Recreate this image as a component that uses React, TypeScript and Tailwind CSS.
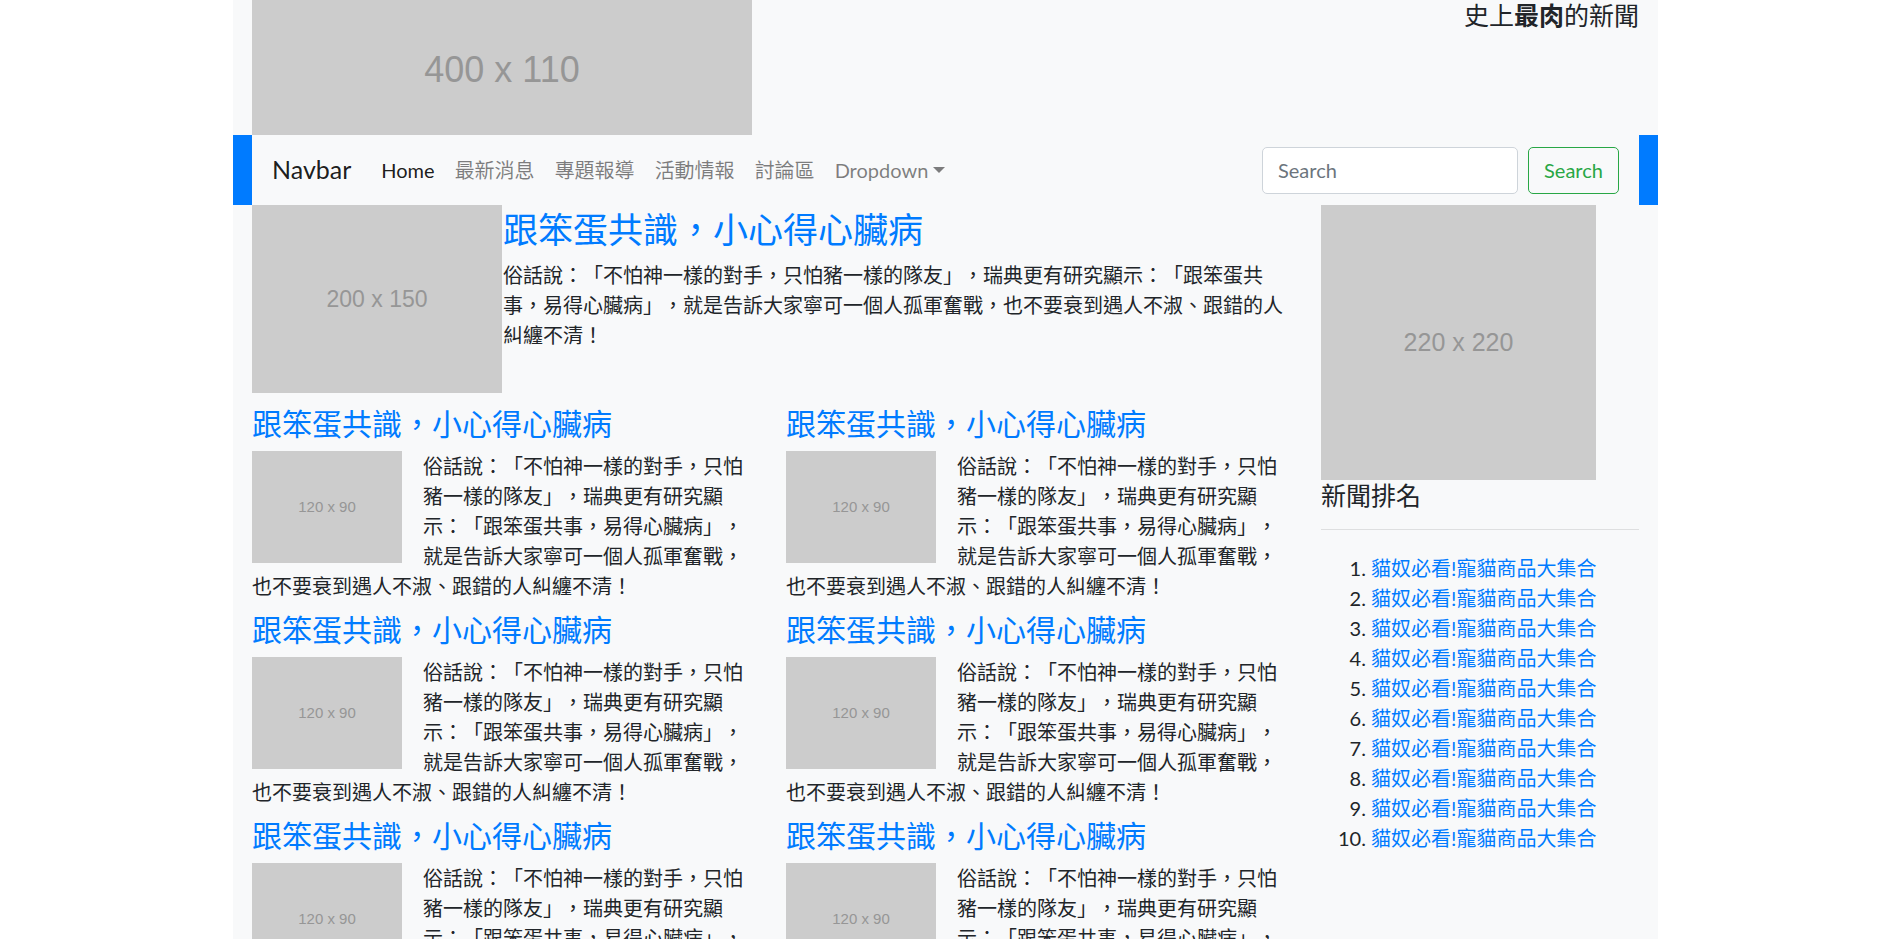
import React from 'react';

const body = '俗話說：「不怕神一樣的對手，只怕豬一樣的隊友」，瑞典更有研究顯示：「跟笨蛋共事，易得心臟病」，就是告訴大家寧可一個人孤軍奮戰，也不要衰到遇人不淑、跟錯的人糾纏不清！';
const title = '跟笨蛋共識，小心得心臟病';

function Placeholder({ label, className }: { label: string; className: string }) {
  return (
    <div className={`flex items-center justify-center bg-[#cccccc] text-[#969696] font-['Liberation_Sans',Arial,sans-serif] ${className}`}>
      {label}
    </div>
  );
}

function Article() {
  return (
    <div className="mb-[10px]">
      <h4 className="text-[30px] leading-[36px] mb-[10px] text-[#007bff]">{title}</h4>
      <div className="text-[20px] leading-[30px] text-[#212529]">
        <Placeholder label="120 x 90" className="float-left w-[150px] h-[112.5px] mr-[21px] text-[15px]" />
        {body}
      </div>
    </div>
  );
}

export default function App() {
  const links = ['最新消息', '專題報導', '活動情報', '討論區'];
  return (
    <div className="min-h-screen bg-white font-['Lato','Noto_Sans_CJK_TC',sans-serif] text-[#212529] [text-spacing-trim:space-all]">
      <div className="mx-auto w-[1425px] min-h-screen bg-[#f8f9fa]">
        {/* header */}
        <div className="flex h-[135px] px-[19px]">
          <Placeholder label="400 x 110" className="w-[500px] h-[135px] pt-[4px] text-[36px]" />
          <div className="flex-1 text-right text-[25px] leading-[30px]">
            史上<b>最肉</b>的新聞
          </div>
        </div>

        {/* navbar */}
        <div className="bg-[#007bff] px-[19px]">
          <nav className="flex h-[70px] items-center bg-[#f8f9fa] px-[20px]">
            <span className="mr-[20px] text-[25px] text-black/90">Navbar</span>
            <a className="px-[10px] text-[20px] text-black/90">Home</a>
            {links.map((l) => (
              <a key={l} className="px-[10px] text-[20px] text-black/50">{l}</a>
            ))}
            <a className="flex items-center px-[10px] text-[20px] text-black/50">
              Dropdown
              <span className="ml-[5px] h-0 w-0 border-x-[6px] border-t-[6px] border-x-transparent border-t-black/50" />
            </a>
            <div className="ml-auto flex items-center">
              <input
                placeholder="Search"
                className="h-[47px] w-[256px] rounded-[5px] border border-[#ced4da] bg-white px-[15px] text-[20px] placeholder:text-[#6c757d] outline-none"
              />
              <button className="ml-[10px] h-[47px] w-[91px] rounded-[5px] border border-[#28a745] text-[20px] text-[#28a745]">
                Search
              </button>
            </div>
          </nav>
        </div>

        {/* main */}
        <div className="flex gap-[38px] px-[19px]">
          <div className="w-[1031px]">
            <div className="flex">
              <Placeholder label="200 x 150" className="w-[250px] h-[187.5px] shrink-0 text-[23px]" />
              <div className="flex-1 pl-[1px] pt-[3px]">
                <h3 className="text-[35px] leading-[42px] mb-[10px] text-[#007bff]">{title}</h3>
                <p className="text-[20px] leading-[30px]">{body}</p>
              </div>
            </div>
            <div className="mt-[12px] grid grid-cols-2 gap-x-[37px]">
              {Array.from({ length: 6 }).map((_, i) => (
                <Article key={i} />
              ))}
            </div>
          </div>

          <div className="w-[318px]">
            <Placeholder label="220 x 220" className="w-[275px] h-[275px] text-[25px]" />
            <h5 className="text-[25px] leading-[30px]">新聞排名</h5>
            <hr className="mt-[19px] mb-[23px] border-t border-black/10" />
            <ol className="list-decimal pl-[50px] text-[20px] leading-[30px]">
              {Array.from({ length: 10 }).map((_, i) => (
                <li key={i}>
                  <a className="text-[#007bff]">貓奴必看!寵貓商品大集合</a>
                </li>
              ))}
            </ol>
          </div>
        </div>
      </div>
    </div>
  );
}
